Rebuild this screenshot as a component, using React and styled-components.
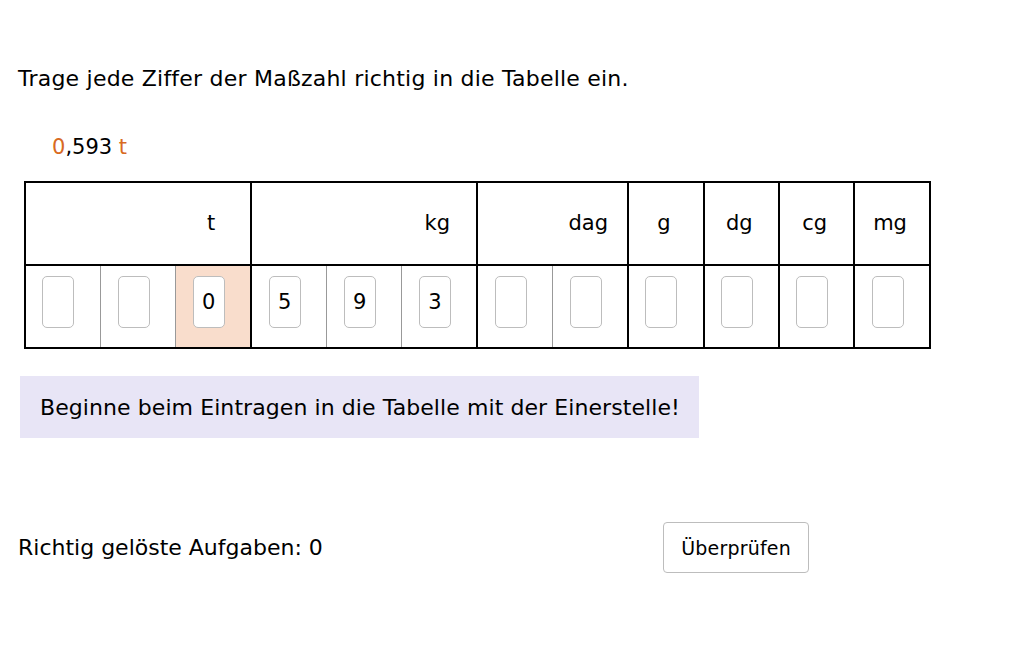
import React from "react";
import styled, { createGlobalStyle } from "styled-components";

const GlobalStyle = createGlobalStyle`
  html, body {
    margin: 0;
    padding: 0;
    background: #ffffff;
  }
  body {
    font-family: "DejaVu Sans", "Liberation Sans", Arial, sans-serif;
    color: #000;
  }
`;

const groups = [
  { unit: "t", cols: 3 },
  { unit: "kg", cols: 3 },
  { unit: "dag", cols: 2 },
  { unit: "g", cols: 1 },
  { unit: "dg", cols: 1 },
  { unit: "cg", cols: 1 },
  { unit: "mg", cols: 1 },
];

const values = ["", "", "0", "5", "9", "3", "", "", "", "", "", ""];
const groupStarts = [0, 3, 6, 8, 9, 10, 11];

const App = () => {
  return (
    <Page>
      <GlobalStyle />
      <Title>Trage jede Ziffer der Maßzahl richtig in die Tabelle ein.</Title>
      <Amount>
        <Accent>0</Accent>,593 <Accent>t</Accent>
      </Amount>
      <Table>
        <colgroup>
          {values.map((_, i) => (
            <col key={i} />
          ))}
        </colgroup>
        <thead>
          <tr>
            {groups.map((g) => (
              <HeadCell key={g.unit} colSpan={g.cols}>
                <HeadInner $cols={g.cols}>
                  <Unit>{g.unit}</Unit>
                </HeadInner>
              </HeadCell>
            ))}
          </tr>
        </thead>
        <tbody>
          <tr>
            {values.map((v, i) => (
              <DigitCell
                key={i}
                $groupStart={groupStarts.includes(i)}
                $active={i === 2}
              >
                <DigitBox value={v} readOnly />
              </DigitCell>
            ))}
          </tr>
        </tbody>
      </Table>
      <Hint>Beginne beim Eintragen in die Tabelle mit der Einerstelle!</Hint>
      <Footer>
        <Score>Richtig gelöste Aufgaben: 0</Score>
        <CheckButton>Überprüfen</CheckButton>
      </Footer>
    </Page>
  );
};

const Page = styled.div`
  display: flex;
  flex-direction: column;
  align-items: flex-start;
  padding: 66px 0 0 18px;
`;

const Title = styled.div`
  font-size: 22px;
  line-height: 26px;
  letter-spacing: 0.22px;
`;

const Amount = styled.div`
  font-size: 21px;
  line-height: 26px;
  margin: 42px 0 0 34px;
`;

const Accent = styled.span`
  color: #d86a22;
`;

const Table = styled.table`
  margin: 21px 0 0 6px;
  width: 905px;
  table-layout: fixed;
  border-collapse: collapse;
  border: 2px solid #000;

  col {
    width: 75.4px;
  }
`;

const HeadCell = styled.th`
  height: 81px;
  padding: 0;
  border: 2px solid #000;
  font-weight: 400;
  font-size: 21px;
`;

const HeadInner = styled.div`
  display: flex;
  justify-content: flex-end;
  padding-left: ${({ $cols }) => ($cols - 1) * 75}px;
`;

const Unit = styled.span`
  flex: 1;
  text-align: center;
  padding: 0 4px 2px 0;
`;

const DigitCell = styled.td`
  height: 72px;
  padding: 0 9px 9px 0;
  text-align: center;
  vertical-align: middle;
  border-top: 2px solid #000;
  border-bottom: 2px solid #000;
  border-left: ${({ $groupStart }) =>
    $groupStart ? "2px solid #000" : "1px solid #999"};
  background: ${({ $active }) => ($active ? "#f9ddcc" : "#fff")};
`;

const DigitBox = styled.input`
  box-sizing: border-box;
  display: block;
  margin: 0 auto;
  width: 32px;
  height: 52px;
  padding: 0;
  border: 1px solid #bdbdbd;
  border-radius: 5px;
  background: #fff;
  font-family: inherit;
  font-size: 21px;
  text-align: center;
  color: #000;
  outline: none;
`;

const Hint = styled.div`
  margin: 27px 0 0 2px;
  width: 679px;
  height: 62px;
  box-sizing: border-box;
  padding: 0 0 0 20px;
  display: flex;
  align-items: center;
  white-space: nowrap;
  background: #e8e5f6;
  font-size: 22px;
  letter-spacing: 0.08px;
`;

const Footer = styled.div`
  margin-top: 84px;
  width: 791px;
  display: flex;
  align-items: center;
  justify-content: space-between;
`;

const Score = styled.div`
  font-size: 22px;
`;

const CheckButton = styled.button`
  height: 51px;
  padding: 0 17px;
  border: 1px solid #bdbdbd;
  border-radius: 4px;
  background: #fff;
  font-family: inherit;
  font-size: 19px;
  letter-spacing: 0.2px;
  color: #000;
`;

export default App;
